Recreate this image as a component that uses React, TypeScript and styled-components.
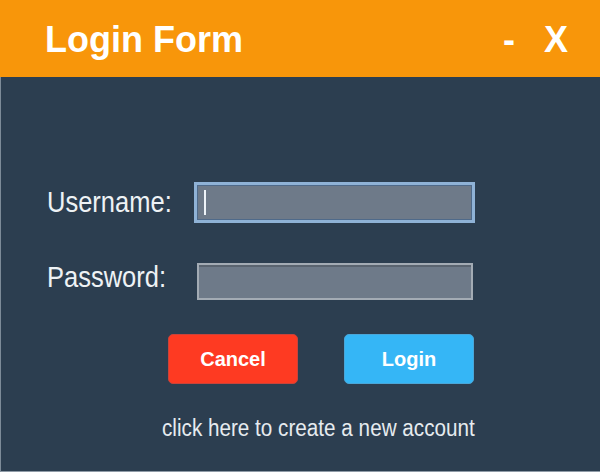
import React from "react";
import styled, { createGlobalStyle } from "styled-components";

const Global = createGlobalStyle`
  html, body { margin: 0; padding: 0; background: #2c3e50; }
  body { font-family: "Liberation Sans", Arial, sans-serif; }
`;

const Window = styled.div`
  width: 600px;
  height: 472px;
  display: flex;
  flex-direction: column;
  overflow: hidden;
`;

const Header = styled.header`
  height: 77px;
  flex: none;
  background: #f8960a;
  display: flex;
  align-items: center;
  justify-content: space-between;
  padding: 3px 32px 0 45px;
  box-sizing: border-box;
`;

const Title = styled.h1`
  margin: 0;
  color: #fff;
  font-family: "Liberation Sans", Arial, sans-serif;
  font-weight: 700;
  font-size: 36px;
  line-height: 1;
`;

const Controls = styled.div`
  display: flex;
  align-items: center;
  gap: 29px;
`;

const WindowButton = styled.span`
  color: #fff;
  font-weight: 700;
  font-size: 36px;
  line-height: 1;
  cursor: pointer;
`;

const Body = styled.main`
  flex: 1;
  background: #2c3e50;
  border-left: 1px solid #7d8b98;
  border-bottom: 1px solid #8f9ba7;
  display: flex;
  flex-direction: column;
  padding: 105px 0 0 46px;
`;

const FormGrid = styled.div`
  display: grid;
  grid-template-columns: 147px auto;
  row-gap: 40px;
  align-items: center;
  justify-items: start;
`;

const Label = styled.label<{ $shift?: number }>`
  color: #eef2f5;
  font-size: 25.5px;
  line-height: 25px;
  transform-origin: left center;
  transform: translateY(${(p) => p.$shift ?? 0}px) scaleY(1.17);
`;

const Field = styled.div<{ $focused?: boolean }>`
  box-sizing: border-box;
  display: flex;
  align-items: center;
  background: #6e7a89;
  width: ${(p) => (p.$focused ? "281px" : "276px")};
  height: ${(p) => (p.$focused ? "41px" : "37px")};
  margin-left: ${(p) => (p.$focused ? "0" : "3px")};
  padding-left: 7px;
  border: ${(p) => (p.$focused ? "3px solid #8fb2d6" : "2px solid #a3abb4")};
  box-shadow: ${(p) =>
    p.$focused
      ? "inset 0 0 0 1px #4f6a8a"
      : "inset 0 2px 0 #5a6470"};
`;

const Caret = styled.span`
  width: 2px;
  height: 25px;
  background: #eef3f8;
`;

const ButtonRow = styled.div`
  display: flex;
  gap: 46px;
  margin: 34px 0 0 121px;
`;

const Button = styled.button<{ $variant: "cancel" | "login" }>`
  width: 130px;
  height: 50px;
  border: 1px solid ${(p) => (p.$variant === "cancel" ? "#c9433a" : "#4aa6d8")};
  border-radius: 5px;
  background: ${(p) => (p.$variant === "cancel" ? "#fe3a22" : "#35b6f6")};
  color: #fff;
  font-family: "Liberation Sans", Arial, sans-serif;
  font-weight: 700;
  font-size: 20px;
  cursor: pointer;
  padding: 0;
`;

const LinkText = styled.a`
  align-self: flex-start;
  margin: 32px 0 0 115px;
  color: #e6ebef;
  font-size: 20.7px;
  line-height: 24px;
  cursor: pointer;
  text-decoration: none;
  transform: scaleY(1.12);
`;

export default function App() {
  return (
    <>
      <Global />
      <Window>
        <Header>
          <Title>Login Form</Title>
          <Controls>
            <WindowButton>-</WindowButton>
            <WindowButton>X</WindowButton>
          </Controls>
        </Header>
        <Body>
          <FormGrid>
            <Label>Username:</Label>
            <Field $focused>
              <Caret />
            </Field>
            <Label $shift={-4}>Password:</Label>
            <Field />
          </FormGrid>
          <ButtonRow>
            <Button $variant="cancel">Cancel</Button>
            <Button $variant="login">Login</Button>
          </ButtonRow>
          <LinkText>click here to create a new account</LinkText>
        </Body>
      </Window>
    </>
  );
}
